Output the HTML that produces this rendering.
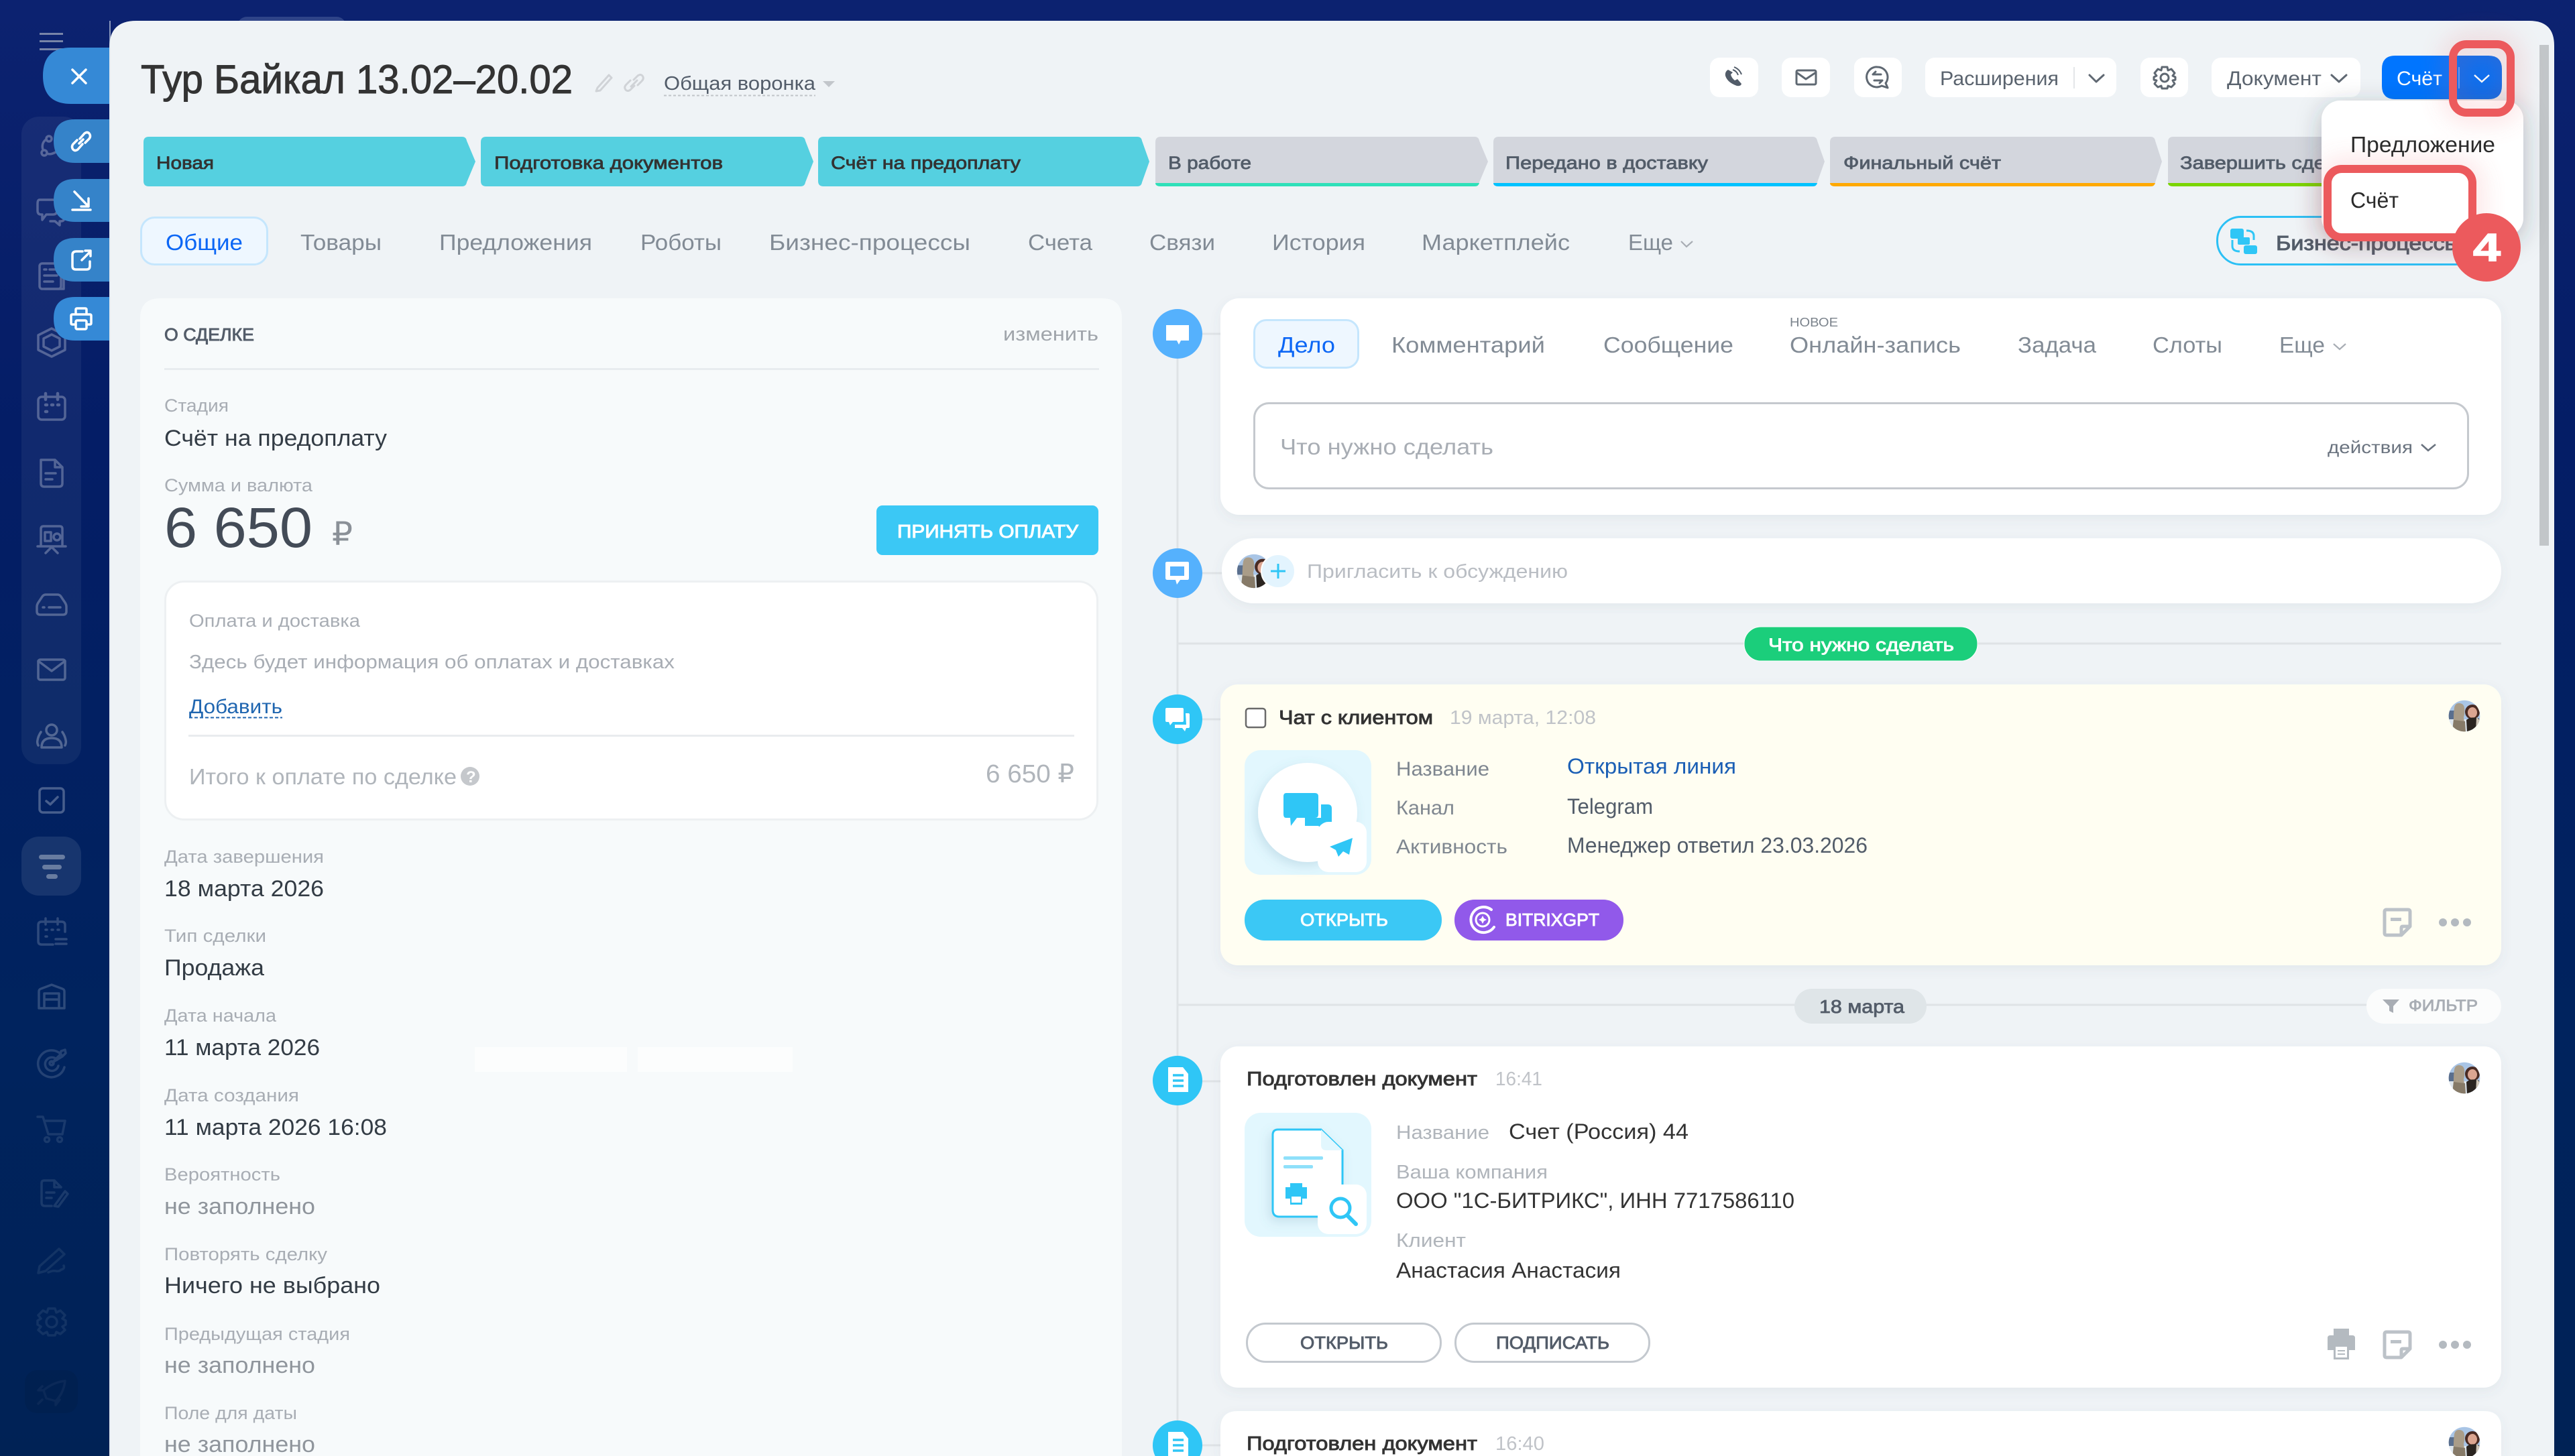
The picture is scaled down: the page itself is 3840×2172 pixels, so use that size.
<!DOCTYPE html>
<html lang="ru"><head><meta charset="utf-8"><title>Тур Байкал 13.02–20.02</title>
<style>
html,body{margin:0;padding:0;background:#04205f;width:3840px;height:2172px;overflow:hidden}
svg{display:block}
text{font-family:"Liberation Sans","DejaVu Sans",sans-serif;white-space:pre}
.st{font-size:27px;fill:#333;stroke:#333;stroke-width:.8}
.sg{font-size:27px;fill:#525c69;stroke:#525c69;stroke-width:.8}
.tb{font-size:33px;fill:#828b95}
.ta{font-size:33px;fill:#0b66f5}
.tp{font-size:30px;fill:#5a636e}
.la{font-size:27px;fill:#a8adb4}
.va{font-size:34px;fill:#333c45}
.em{font-size:34px;fill:#8f959c}
.lk{font-size:30px;fill:#7f8790}
.lb{font-size:29px;fill:#b0b5bb}
.vb{font-size:32px;fill:#333}
.hd{font-size:29px;fill:#333;stroke:#333;stroke-width:.9}
.tm{font-size:29px;fill:#c0c3c8}
.bw{font-size:26px;fill:#fff;stroke:#fff;stroke-width:.9}
.bd{font-size:26px;fill:#535c69;stroke:#535c69;stroke-width:.9}
.ic{fill:none;stroke:#fff;stroke-width:3.5;stroke-linecap:round;stroke-linejoin:round}
.ig{fill:none;stroke:#5f6872;stroke-width:3;stroke-linecap:round;stroke-linejoin:round}
.w{fill:none;stroke:#fff;stroke-width:3.5;stroke-linecap:round;stroke-linejoin:round}
</style></head>
<body>
<svg xmlns="http://www.w3.org/2000/svg" width="3840" height="2172" viewBox="0 0 3840 2172">
<defs>
<linearGradient id="bg" x1="0" y1="0" x2="0" y2="1"><stop offset="0" stop-color="#0c2270"/><stop offset=".3" stop-color="#041d66"/><stop offset=".7" stop-color="#00235e"/><stop offset="1" stop-color="#002255"/></linearGradient>
<filter id="card" x="-5%" y="-15%" width="110%" height="130%"><feDropShadow dx="0" dy="6" stdDeviation="8" flood-color="#5a6a78" flood-opacity=".08"/></filter>
<filter id="drop" x="-40%" y="-40%" width="180%" height="180%"><feDropShadow dx="0" dy="8" stdDeviation="18" flood-color="#2a3540" flood-opacity=".3"/></filter>
<filter id="glow" x="-60%" y="-60%" width="220%" height="220%"><feGaussianBlur stdDeviation="20"/></filter>
<filter id="soft" x="-30%" y="-30%" width="160%" height="160%"><feDropShadow dx="-4" dy="6" stdDeviation="8" flood-color="#5a8ca5" flood-opacity=".2"/></filter>
<clipPath id="avc"><circle r="23.300"/></clipPath>
<g id="av"><g clip-path="url(#avc)">
<rect x="-24" y="-24" width="48" height="48" fill="#a9c5e6"/>
<rect x="-24" y="-8" width="14" height="14" fill="#5a6f8e"/>
<rect x="-24" y="5" width="48" height="20" fill="#dfe7ee"/>
<path d="M-15-12Q-14-19-8-19Q-1-19 0-12Q1-4-1 2L2 24H-18L-16 4Q-16-6-15-12Z" fill="#a99c88"/>
<path d="M-16 6L-18 24H2L1 8Z" fill="#867a68"/>
<circle cx="12" cy="-6" r="11" fill="#4a2b23"/>
<ellipse cx="12" cy="-5" rx="7" ry="8" fill="#dba591"/>
<path d="M3 6Q10 0 22 4L25 24H4Z" fill="#2a2420"/>
<path d="M18 2L25 8V24H17Z" fill="#cfc6b8"/>
</g></g>
<g id="note"><path d="M-19-16Q-19-19-16-19H16Q19-19 19-16V6L6 19H-16Q-19 19-19 16Z" fill="none" stroke="#bcc2c8" stroke-width="5" stroke-linejoin="round"/><rect x="-10" y="-7" width="16" height="5" fill="#bcc2c8"/><path d="M6 19V8Q6 6 8 6H19" fill="none" stroke="#bcc2c8" stroke-width="5"/></g>
<g id="dots" fill="#b4bac0"><circle cx="-18" r="6"/><circle r="6"/><circle cx="18" r="6"/></g>
</defs>

<rect width="3840" height="2172" fill="url(#bg)"/>
<rect x="354" y="25" width="162" height="30" rx="14" fill="#2f4488"/>
<g fill="#7885a8"><rect x="59" y="49" width="35" height="3"/><rect x="59" y="60" width="35" height="3"/><rect x="59" y="72" width="35" height="3"/></g>
<rect x="32" y="174" width="89" height="966" rx="26" fill="#fff" opacity=".055"/>
<rect x="32" y="1248" width="89" height="88" rx="26" fill="#fff" opacity=".09"/>
<rect x="37" y="2044" width="79" height="64" rx="18" fill="#000" opacity=".06"/>

<!-- sidebar icons -->
<g class="ic" opacity=".28">
<g transform="translate(77,215)"><circle cx="-11" cy="13" r="4"/><circle cx="-4" cy="-8" r="4"/><path d="M-13 8C-15 2-13-4-8-7M-7 14C-2 16 2 14 6 12"/></g>
<g transform="translate(77,316)"><path d="M-18-18H2Q8-18 8-12V-2Q8 4 2 4H-8L-14 12V4H-16Q-21 4-21-2V-12Q-21-18-18-18Z"/><path d="M8-6H14Q19-6 19 0V8Q19 14 14 14H12V20L5 14H-2"/></g>
<g transform="translate(77,412)"><rect x="-18" y="-19" width="32" height="38" rx="4"/><path d="M-11-10H-8M-3-10H8M-11-1H8M-11 8H2M14-12H18V19H-10"/></g>
<g transform="translate(77,511)"><path d="M0-21L20-11V11L0 21L-20 11V-11Z"/><path d="M0-12L12-6V6L0 12L-12 6V-6Z"/></g>
<g transform="translate(77,607)"><rect x="-20" y="-15" width="40" height="34" rx="5"/><path d="M-9-20V-11M9-20V-11M-9-3H-7M0-3H2M9-3H11M-9 7H-7" stroke-width="4.500"/></g>
<g transform="translate(77,706)"><path d="M-16-20H5L16-9V15Q16 20 11 20H-11Q-16 20-16 15ZM5-20V-9H16M-9 0H6M-9 9H1"/></g>
<g transform="translate(77,805)"><path d="M-21 10H21M-16 10V-16Q-16-20-12-20H12Q16-20 16-16V10M-9 20L0 11L9 20"/><rect x="-10" y="-11" width="9" height="13"/><ellipse cx="8" cy="-4" rx="5" ry="5"/></g>
<g transform="translate(77,902)"><path d="M-22 10V3Q-22 0-20-3L-14-12Q-12-15-9-15H9Q12-15 14-12L20-3Q22 0 22 3V10Q22 15 17 15H-17Q-22 15-22 10Z"/><path d="M-13 4H-11M-4 4H13"/></g>
<g transform="translate(77,999)"><rect x="-20" y="-15" width="40" height="30" rx="3"/><path d="M-20-13L0 2L20-13"/></g>
<g transform="translate(77,1098)"><circle cy="-9" r="8"/><path d="M-15 17Q-15 3 0 3Q15 3 15 17ZM-16-6Q-20 0-21 6Q-22 10-20 14M16-6Q20 0 21 6Q22 10 20 14"/></g>
<g transform="translate(77,1194)"><rect x="-18" y="-18" width="36" height="36" rx="5"/><path d="M-8 1L-2 6L9-5"/></g>
</g>
<g fill="#fff" opacity=".35"><rect x="58" y="1275" width="39" height="7" rx="3.500"/><rect x="63" y="1290" width="29" height="7" rx="3.500"/><rect x="69" y="1304" width="17" height="7" rx="3.500"/></g>
<g class="ic" opacity=".18">
<g transform="translate(77,1390)"><path d="M20 0V-10Q20-15 15-15H-15Q-20-15-20-10V14Q-20 19-15 19H2"/><path d="M-9-20V-11M9-20V-11M-9-3H-7M0-3H2M9-3H11M-9 7H-7M6 11H22M6 18H22"/></g>
<g transform="translate(77,1487)"><path d="M-19 17V-8Q-19-11-16-12L0-18L16-12Q19-11 19-8V17ZM-11 17V-5H11V17M-11 4H11"/></g>
</g>
<g class="ic" opacity=".14">
<g transform="translate(77,1586)"><path d="M15-12A20 20 0 1 0 19 6"/><path d="M8-5A10 10 0 1 0 10 4"/><circle r="3"/><path d="M1-1L13-13L14-18L20-20L21-15L16-10Z"/></g>
</g>
<g class="ic" opacity=".1">
<g transform="translate(77,1684)"><path d="M-21-18H-13L-5 8H16L20-12H-11"/><circle cx="-7" cy="16" r="3.500"/><circle cx="12" cy="16" r="3.500"/></g>
<g transform="translate(77,1781)"><path d="M-15 13V-16Q-15-20-11-20H4L14-10M4-20V-10H14M-15 13Q-15 18-10 18H0M-8-2H4M-8 6H0M4 18L20-4L24 0L10 19Z"/></g>
</g>
<g class="ic" opacity=".075">
<g transform="translate(77,1879)"><path d="M-18 10L11-16L19-8L-9 17L-20 20ZM-5 19Q2 16 6 17Q12 18 14 15Q20 14 18 9"/></g>
<g transform="translate(77,1972)"><circle r="8"/><path d="M-5-20H5L7-14L13-17L20-10L16-5L21-2V4L16 7L20 12L13 18L7 15L5 20H-5L-7 15L-13 18L-20 12L-16 7L-21 4V-2L-16-5L-20-10L-13-17L-7-14Z"/></g>
</g>
<g class="ic" opacity=".045" transform="translate(77,2076)"><path d="M-8 10L-12-2Q2-14 20-16Q18 2 6 14ZM-12-2H-20L-14-8M6 14V20L12 12M-14 12L-20 18"/></g>

<!-- main panel -->
<path d="M163 71Q163 31 203 31H3772Q3809 31 3809 68V2172H163Z" fill="#eff3f6"/>
<rect x="163" y="31" width="2" height="2141" fill="#dfe8f0" opacity=".6"/>
<rect x="3787" y="67" width="14" height="747" fill="#c2c6c9"/>

<!-- side tabs -->
<path d="M163 71H106Q64 71 64 113Q64 155 106 155H163Z" fill="#3589d6"/>
<path d="M163 178H112Q80 178 80 210Q80 243 112 243H163Z" fill="#3583c9"/>
<path d="M163 267H112Q80 267 80 299Q80 331 112 331H163Z" fill="#3583c9"/>
<path d="M163 355H112Q80 355 80 387Q80 420 112 420H163Z" fill="#3583c9"/>
<path d="M163 443H112Q80 443 80 475Q80 508 112 508H163Z" fill="#3589d6"/>
<path d="M108 104L128 124M128 104L108 124" class="w"/>
<g class="w" transform="translate(121,211)"><path d="M-2-4L5-12Q9-15 12-12Q15-8 12-4L6 2M2 4L-5 12Q-9 15-12 12Q-15 8-12 4L-6-2M-3 3L3-3"/></g>
<g class="w" transform="translate(121,299)"><path d="M-10-13L11 9M11-3V9H0M-13 14H14"/></g>
<g class="w" transform="translate(121,388)"><path d="M2-13H-7Q-13-13-13-8V9Q-13 14-8 14H8Q13 14 13 9V2M1 0L14-13M6-14H14V-6"/></g>
<g class="w" transform="translate(121,476)"><path d="M-8-7V-14Q-8-16-6-16H6Q8-16 8-14V-7M-8 8H-13Q-15 8-15 6V-5Q-15-7-13-7H13Q15-7 15-5V6Q15 8 13 8H8"/><rect x="-8" y="2" width="16" height="13" rx="2"/></g>

<!-- header -->
<text x="210" y="139" font-size="60" fill="#333" stroke="#333" stroke-width="1" textLength="644" lengthAdjust="spacingAndGlyphs">Тур Байкал 13.02–20.02</text>
<g fill="none" stroke="#d0d3d7" stroke-width="3" stroke-linejoin="round" stroke-linecap="round"><path d="M891 131L908 112L912 116L895 135L889 136Z"/><path d="M945 119L951 113Q955 110 958 113Q961 117 957 121L951 127M946 128L940 134Q936 137 933 134Q930 130 934 126L940 120M941 129L950 120"/></g>
<text x="990" y="134" font-size="29" fill="#525c69" textLength="226" lengthAdjust="spacingAndGlyphs">Общая воронка</text>
<path d="M990 142.500H1216" stroke="#c0c4c8" stroke-width="2" stroke-dasharray="4 3"/>
<path d="M1227 121H1245L1236 130Z" fill="#c2c6cb"/>

<!-- tool buttons -->
<g fill="#fff"><rect x="2550" y="86" width="72" height="59" rx="14"/><rect x="2657" y="86" width="72" height="59" rx="14"/><rect x="2765" y="86" width="71" height="59" rx="14"/><rect x="2871" y="86" width="285" height="59" rx="14"/><rect x="3192" y="86" width="71" height="59" rx="14"/><rect x="3298" y="86" width="222" height="59" rx="14"/></g>
<path d="M2577 104Q2572 107 2573 113Q2576 123 2590 128Q2596 129 2597 125L2591 118L2587 120Q2582 116 2581 111L2584 108Z" fill="#525c69"/>
<path d="M2584 104Q2590 106 2592 112M2586 100Q2594 103 2597 111" fill="none" stroke="#525c69" stroke-width="2"/>
<g class="ig"><rect x="2679" y="105" width="29" height="21" rx="2"/><path d="M2679 108L2693 118L2708 108"/></g>
<g class="ig"><path d="M2800 100A15 15 0 0 1 2812 124L2815 131L2806 128A15 15 0 1 1 2800 100Z"/><path d="M2793 111H2805M2793 111L2797 107M2807 120H2795M2807 120L2803 124"/></g>
<text x="2893" y="127" class="tp" textLength="177" lengthAdjust="spacingAndGlyphs">Расширения</text>
<path d="M3093 100V132" stroke="#e3e6e9" stroke-width="2"/>
<path d="M3116 112L3126 122L3137 112" class="ig" stroke-width="2.400"/>
<g class="ig" transform="translate(3228,116)"><circle r="6"/><path d="M-4-16H4L5-11L10-13L15-7L12-3L16-1V3L12 4L15 9L10 14L5 12L4 16H-4L-5 12L-10 14L-15 9L-12 4L-16 3V-1L-12-3L-15-7L-10-13L-5-11Z"/></g>
<text x="3321" y="127" class="tp" textLength="141" lengthAdjust="spacingAndGlyphs">Документ</text>
<path d="M3477 112L3488 122L3499 112" class="ig" stroke-width="2.400"/>

<!-- stages -->
<g fill="#55d0e0">
<path d="M222 204H689Q695 204 696 210L709 241L696 272Q695 278 689 278H222Q214 278 214 270V212Q214 204 222 204Z"/>
<path d="M725 204H1194Q1200 204 1201 210L1213 241L1201 272Q1200 278 1194 278H725Q717 278 717 270V212Q717 204 725 204Z"/>
<path d="M1228 204H1696Q1702 204 1703 210L1714 241L1703 272Q1702 278 1696 278H1228Q1220 278 1220 270V212Q1220 204 1228 204Z"/>
</g>
<g fill="#d3d6dd">
<path d="M1731 204H2199Q2205 204 2206 210L2219 241L2206 272Q2205 278 2199 278H1731Q1723 278 1723 270V212Q1723 204 1731 204Z"/>
<path d="M2235 204H2703Q2709 204 2710 210L2721 241L2710 272Q2709 278 2703 278H2235Q2227 278 2227 270V212Q2227 204 2235 204Z"/>
<path d="M2737 204H3207Q3213 204 3214 210L3224 241L3214 272Q3213 278 3207 278H2737Q2729 278 2729 270V212Q2729 204 2737 204Z"/>
<path d="M3241 204H3710Q3716 204 3717 210L3727 241L3717 272Q3716 278 3710 278H3241Q3233 278 3233 270V212Q3233 204 3241 204Z"/>
</g>
<path d="M1723 273H2206Q2205 278 2199 278H1731Q1723 278 1723 273Z" fill="#2fe0b9"/>
<path d="M2227 273H2710Q2709 278 2703 278H2235Q2227 278 2227 273Z" fill="#00c2ff"/>
<path d="M2729 273H3214Q3213 278 3207 278H2737Q2729 278 2729 273Z" fill="#ffa900"/>
<path d="M3233 273H3717Q3716 278 3710 278H3241Q3233 278 3233 273Z" fill="#7bd500"/>
<text x="233" y="252" class="st" textLength="86" lengthAdjust="spacingAndGlyphs">Новая</text>
<text x="737" y="252" class="st" textLength="341" lengthAdjust="spacingAndGlyphs">Подготовка документов</text>
<text x="1239" y="252" class="st" textLength="283" lengthAdjust="spacingAndGlyphs">Счёт на предоплату</text>
<text x="1742" y="252" class="sg" textLength="124" lengthAdjust="spacingAndGlyphs">В работе</text>
<text x="2245" y="252" class="sg" textLength="302" lengthAdjust="spacingAndGlyphs">Передано в доставку</text>
<text x="2749" y="252" class="sg" textLength="235" lengthAdjust="spacingAndGlyphs">Финальный счёт</text>
<text x="3251" y="252" class="sg" textLength="263" lengthAdjust="spacingAndGlyphs">Завершить сделку</text>

<!-- tabs -->
<rect x="210.500" y="324.500" width="188" height="70" rx="20" fill="#eef7ff" stroke="#c5e6fd" stroke-width="3"/>
<text x="247" y="373" class="ta" textLength="115" lengthAdjust="spacingAndGlyphs">Общие</text>
<text x="448" y="373" class="tb" textLength="121" lengthAdjust="spacingAndGlyphs">Товары</text>
<text x="655" y="373" class="tb" textLength="228" lengthAdjust="spacingAndGlyphs">Предложения</text>
<text x="955" y="373" class="tb" textLength="121" lengthAdjust="spacingAndGlyphs">Роботы</text>
<text x="1147" y="373" class="tb" textLength="300" lengthAdjust="spacingAndGlyphs">Бизнес-процессы</text>
<text x="1533" y="373" class="tb" textLength="96" lengthAdjust="spacingAndGlyphs">Счета</text>
<text x="1714" y="373" class="tb" textLength="98" lengthAdjust="spacingAndGlyphs">Связи</text>
<text x="1897" y="373" class="tb" textLength="139" lengthAdjust="spacingAndGlyphs">История</text>
<text x="2120" y="373" class="tb" textLength="221" lengthAdjust="spacingAndGlyphs">Маркетплейс</text>
<text x="2428" y="373" class="tb" textLength="67" lengthAdjust="spacingAndGlyphs">Еще</text>
<path d="M2507 360L2515 368L2524 360" fill="none" stroke="#a8adb4" stroke-width="2.200"/>

<!-- business process button -->
<rect x="3306.500" y="323.500" width="440" height="71" rx="35" fill="none" stroke="#2bc0f5" stroke-width="3"/>
<g fill="#2fc6f6"><rect x="3326" y="341" width="20" height="15" rx="3"/><rect x="3337" y="354" width="18" height="11" rx="2"/><rect x="3346" y="366" width="20" height="13" rx="3"/></g>
<path d="M3350 344Q3361 344 3361 352V358M3340 375Q3329 375 3329 367V358" fill="none" stroke="#2fc6f6" stroke-width="3"/>
<text x="3394" y="373" font-size="31" fill="#525c69" stroke="#525c69" stroke-width="1" textLength="276" lengthAdjust="spacingAndGlyphs">Бизнес-процессы</text>

<!-- left card -->
<path d="M239 445H1643Q1673 445 1673 475V2172H209V475Q209 445 239 445Z" fill="#f7fafb"/>
<text x="245" y="508" font-size="26" fill="#535c69" stroke="#535c69" stroke-width=".9" textLength="134" lengthAdjust="spacingAndGlyphs">О СДЕЛКЕ</text>
<text x="1496" y="508" font-size="29" fill="#a0a5ab" textLength="142" lengthAdjust="spacingAndGlyphs">изменить</text>
<rect x="245" y="549" width="1394" height="3" fill="#e8ecef"/>
<text x="245" y="614" class="la" textLength="96" lengthAdjust="spacingAndGlyphs">Стадия</text>
<text x="245" y="665" class="va" textLength="332" lengthAdjust="spacingAndGlyphs">Счёт на предоплату</text>
<text x="245" y="733" class="la" textLength="221" lengthAdjust="spacingAndGlyphs">Сумма и валюта</text>
<text x="245" y="816" font-size="84" fill="#434b57" textLength="221" lengthAdjust="spacingAndGlyphs">6 650</text>
<text x="495" y="813" font-size="48" fill="#8a9097" textLength="31" lengthAdjust="spacingAndGlyphs">₽</text>
<rect x="1307" y="754" width="331" height="74" rx="9" fill="#3bc8f5"/>
<text x="1338" y="802" font-size="28" fill="#fff" stroke="#fff" stroke-width="1" textLength="270" lengthAdjust="spacingAndGlyphs">ПРИНЯТЬ ОПЛАТУ</text>
<rect x="246.500" y="867.500" width="1390" height="355" rx="28" fill="#fff" stroke="#edf0f2" stroke-width="3"/>
<text x="282" y="935" class="la" textLength="255" lengthAdjust="spacingAndGlyphs">Оплата и доставка</text>
<text x="282" y="997" font-size="29" fill="#a8adb4" textLength="724" lengthAdjust="spacingAndGlyphs">Здесь будет информация об оплатах и доставках</text>
<text x="282" y="1064" font-size="30" fill="#2066b0" textLength="139" lengthAdjust="spacingAndGlyphs">Добавить</text>
<path d="M282 1070.500H421" stroke="#2066b0" stroke-width="2" stroke-dasharray="5 3"/>
<rect x="281" y="1096" width="1321" height="3" fill="#e9ecee"/>
<text x="282" y="1170" font-size="33" fill="#b0b5bb" textLength="399" lengthAdjust="spacingAndGlyphs">Итого к оплате по сделке</text>
<circle cx="701" cy="1158" r="14" fill="#c5c8cc"/><text x="695" y="1167" font-size="24" font-weight="700" fill="#fff">?</text>
<text x="1470" y="1167" font-size="38" fill="#b0b5bb" textLength="132" lengthAdjust="spacingAndGlyphs">6 650 ₽</text>

<text x="245" y="1287" class="la" textLength="238" lengthAdjust="spacingAndGlyphs">Дата завершения</text>
<text x="245" y="1337" class="va" textLength="238" lengthAdjust="spacingAndGlyphs">18 марта 2026</text>
<text x="245" y="1405" class="la" textLength="152" lengthAdjust="spacingAndGlyphs">Тип сделки</text>
<text x="245" y="1455" class="va" textLength="149" lengthAdjust="spacingAndGlyphs">Продажа</text>
<text x="245" y="1524" class="la" textLength="167" lengthAdjust="spacingAndGlyphs">Дата начала</text>
<text x="245" y="1574" class="va" textLength="232" lengthAdjust="spacingAndGlyphs">11 марта 2026</text>
<text x="245" y="1643" class="la" textLength="201" lengthAdjust="spacingAndGlyphs">Дата создания</text>
<text x="245" y="1693" class="va" textLength="332" lengthAdjust="spacingAndGlyphs">11 марта 2026 16:08</text>
<text x="245" y="1761" class="la" textLength="173" lengthAdjust="spacingAndGlyphs">Вероятность</text>
<text x="245" y="1811" class="em" textLength="225" lengthAdjust="spacingAndGlyphs">не заполнено</text>
<text x="245" y="1880" class="la" textLength="243" lengthAdjust="spacingAndGlyphs">Повторять сделку</text>
<text x="245" y="1929" class="va" textLength="322" lengthAdjust="spacingAndGlyphs">Ничего не выбрано</text>
<text x="245" y="1999" class="la" textLength="277" lengthAdjust="spacingAndGlyphs">Предыдущая стадия</text>
<text x="245" y="2048" class="em" textLength="225" lengthAdjust="spacingAndGlyphs">не заполнено</text>
<text x="245" y="2117" class="la" textLength="198" lengthAdjust="spacingAndGlyphs">Поле для даты</text>
<text x="245" y="2166" class="em" textLength="225" lengthAdjust="spacingAndGlyphs">не заполнено</text>
<rect x="708" y="1562" width="227" height="37" fill="#fcfdfd"/><rect x="951" y="1562" width="231" height="37" fill="#fcfdfd"/>

<!-- timeline -->
<g stroke="#dfe3e6" stroke-width="3" fill="none"><path d="M1756 498V2172"/><path d="M1756 498H1820M1756 855H1826M1756 1073H1820M1756 1613H1820M1756 2156H1820"/><path d="M1756 960H3730M1756 1499H3730"/></g>

<!-- editor card -->
<rect x="1820" y="445" width="1910" height="323" rx="28" fill="#fff" filter="url(#card)"/>
<rect x="1870.500" y="477.500" width="155" height="71" rx="18" fill="#eef7ff" stroke="#c5e6fd" stroke-width="3"/>
<text x="1906" y="526" class="ta" textLength="85" lengthAdjust="spacingAndGlyphs">Дело</text>
<text x="2075" y="526" class="tb" textLength="229" lengthAdjust="spacingAndGlyphs">Комментарий</text>
<text x="2391" y="526" class="tb" textLength="194" lengthAdjust="spacingAndGlyphs">Сообщение</text>
<text x="2669" y="487" font-size="18" fill="#7b838c" textLength="72" lengthAdjust="spacingAndGlyphs">НОВОЕ</text>
<text x="2669" y="526" class="tb" textLength="255" lengthAdjust="spacingAndGlyphs">Онлайн-запись</text>
<text x="3009" y="526" class="tb" textLength="117" lengthAdjust="spacingAndGlyphs">Задача</text>
<text x="3210" y="526" class="tb" textLength="104" lengthAdjust="spacingAndGlyphs">Слоты</text>
<text x="3399" y="526" class="tb" textLength="68" lengthAdjust="spacingAndGlyphs">Еще</text>
<path d="M3480 513L3489 521L3498 513" fill="none" stroke="#a8adb4" stroke-width="2.200"/>
<rect x="1870.500" y="601.500" width="1810" height="127" rx="22" fill="#fff" stroke="#c5c9ce" stroke-width="3"/>
<text x="1909" y="678" font-size="33" fill="#a8adb4" textLength="318" lengthAdjust="spacingAndGlyphs">Что нужно сделать</text>
<text x="3471" y="676" font-size="26" fill="#6a737f" textLength="127" lengthAdjust="spacingAndGlyphs">действия</text>
<path d="M3611 663L3621 672L3632 663" fill="none" stroke="#6a737f" stroke-width="2.600"/>

<!-- invite card -->
<rect x="1822" y="803" width="1908" height="97" rx="48" fill="#fff" filter="url(#card)"/>
<use href="#av" transform="translate(1870,852) scale(1.080)"/>
<circle cx="1906" cy="852" r="25" fill="#e3f4fe" stroke="#fff" stroke-width="2"/>
<path d="M1906 841V863M1895 852H1917" stroke="#2fc6f6" stroke-width="3"/>
<text x="1949" y="862" font-size="29" fill="#b9bdc3" textLength="389" lengthAdjust="spacingAndGlyphs">Пригласить к обсуждению</text>

<!-- circles -->
<circle cx="1756" cy="498" r="37" fill="#55b1fd"/>
<path d="M1739 485H1773V508H1761L1758 514L1755 508H1739Z" fill="#fff"/>
<circle cx="1756" cy="855" r="37" fill="#55b1fd"/>
<path d="M1741 838H1771Q1773 838 1773 840V862Q1773 865 1771 865H1760L1755 872L1753 865H1741Q1738 865 1738 862V840Q1738 838 1741 838ZM1745 845V859H1766V845Z" fill="#fff" fill-rule="evenodd"/>
<circle cx="1756" cy="1073" r="37" fill="#2fc6f6"/>
<path d="M1740 1056H1763Q1765 1056 1765 1058V1075Q1765 1077 1763 1077H1749L1745 1082L1743 1077H1740Q1738 1077 1738 1075V1058Q1738 1056 1740 1056Z" fill="#fff"/>
<path d="M1768 1064H1772Q1774 1064 1774 1066V1084Q1774 1086 1772 1086H1769L1767 1091L1763 1086H1752V1081H1769Z" fill="#fff"/>
<circle cx="1756" cy="1612" r="37" fill="#2fc6f6"/>
<path d="M1742 1592H1764L1772 1602V1629H1742Z" fill="#fff"/><path d="M1749 1604H1765M1749 1612H1765M1749 1620H1765" stroke="#2fc6f6" stroke-width="3.500"/>

<!-- open-line card -->
<rect x="1820" y="1021" width="1910" height="419" rx="26" fill="#fffef2" filter="url(#card)"/>
<rect x="1858" y="1057" width="29" height="28" rx="4" fill="#fff" stroke="#6a6a6a" stroke-width="2.500"/>
<text x="1907" y="1080" class="hd" textLength="230" lengthAdjust="spacingAndGlyphs">Чат с клиентом</text>
<text x="2162" y="1080" class="tm" textLength="218" lengthAdjust="spacingAndGlyphs">19 марта, 12:08</text>
<use href="#av" transform="translate(3675,1068)"/>
<rect x="1856" y="1119" width="189" height="186" rx="24" fill="#e2f7fe"/>
<circle cx="1950" cy="1212" r="74" fill="#fff" filter="url(#soft)"/>
<path d="M1970 1200H1980Q1986 1200 1986 1206V1226Q1986 1232 1980 1232H1978L1976 1240L1966 1232H1946V1220H1970Z" fill="#2fc6f6"/>
<path d="M1918 1183H1961Q1966 1183 1966 1188V1215Q1966 1220 1961 1220H1934L1925 1232L1924 1220H1918Q1914 1220 1914 1215V1188Q1914 1183 1918 1183Z" fill="#2fc6f6"/>
<rect x="1965" y="1226" width="73" height="75" rx="16" fill="#fff"/>
<path d="M2017 1250L1983 1263L1992 1268L1996 1278L2003 1270L2012 1275Z" fill="#2fc6f6"/>
<text x="2082" y="1157" class="lk" textLength="139" lengthAdjust="spacingAndGlyphs">Название</text>
<text x="2337" y="1154" font-size="32" fill="#1b5fb5" textLength="252" lengthAdjust="spacingAndGlyphs">Открытая линия</text>
<text x="2082" y="1215" class="lk" textLength="87" lengthAdjust="spacingAndGlyphs">Канал</text>
<text x="2337" y="1214" font-size="32" fill="#525c69" textLength="128" lengthAdjust="spacingAndGlyphs">Telegram</text>
<text x="2082" y="1273" class="lk" textLength="166" lengthAdjust="spacingAndGlyphs">Активность</text>
<text x="2337" y="1272" font-size="32" fill="#525c69" textLength="448" lengthAdjust="spacingAndGlyphs">Менеджер ответил 23.03.2026</text>
<rect x="1856" y="1342" width="294" height="61" rx="30" fill="#3bc8f5"/>
<text x="1939" y="1381" class="bw" textLength="131" lengthAdjust="spacingAndGlyphs">ОТКРЫТЬ</text>
<rect x="2169" y="1342" width="252" height="61" rx="30" fill="#9159ea"/>
<path d="M2224 1357A19 19 0 1 0 2228 1383" fill="none" stroke="#fff" stroke-width="4" stroke-linecap="round"/>
<circle cx="2211" cy="1372" r="10" fill="none" stroke="#fff" stroke-width="3"/><path d="M2211 1366L2213 1370L2217 1372L2213 1374L2211 1378L2209 1374L2205 1372L2209 1370Z" fill="#fff"/>
<text x="2245" y="1381" class="bw" textLength="140" lengthAdjust="spacingAndGlyphs">BITRIXGPT</text>
<use href="#note" transform="translate(3575,1376)"/>
<use href="#dots" transform="translate(3661,1376)"/>

<!-- date pills -->
<rect x="2601" y="935" width="348" height="51" rx="25" fill="#1bce7b" stroke="#fff" stroke-width="1"/>
<text x="2637" y="971" font-size="27" fill="#fff" stroke="#fff" stroke-width=".9" textLength="277" lengthAdjust="spacingAndGlyphs">Что нужно сделать</text>
<rect x="2676" y="1475" width="197" height="52" rx="26" fill="#dfe5e8"/>
<text x="2713" y="1511" font-size="28" fill="#535c69" stroke="#535c69" stroke-width=".8" textLength="127" lengthAdjust="spacingAndGlyphs">18 марта</text>
<rect x="3529" y="1475" width="201" height="52" rx="26" fill="#fbfcfc"/>
<path d="M3553 1491H3578L3569 1501V1511L3563 1508V1501Z" fill="#a8adb4"/>
<text x="3592" y="1508" font-size="24" fill="#a8adb4" stroke="#a8adb4" stroke-width=".8" textLength="103" lengthAdjust="spacingAndGlyphs">ФИЛЬТР</text>

<!-- document card -->
<rect x="1820" y="1561" width="1910" height="509" rx="26" fill="#fff" filter="url(#card)"/>
<text x="1859" y="1619" class="hd" textLength="344" lengthAdjust="spacingAndGlyphs">Подготовлен документ</text>
<text x="2230" y="1619" class="tm" textLength="70" lengthAdjust="spacingAndGlyphs">16:41</text>
<use href="#av" transform="translate(3675,1608)"/>
<rect x="1856" y="1660" width="189" height="185" rx="24" fill="#e2f7fe"/>
<path d="M1906 1685H1970L2002 1716V1805Q2002 1815 1992 1815H1908Q1898 1815 1898 1805V1693Q1898 1685 1906 1685Z" fill="#fff" stroke="#2fc6f6" stroke-width="3" filter="url(#soft)"/>
<path d="M1970 1685V1708Q1970 1716 1978 1716H2002Z" fill="#e2f7fe"/>
<rect x="1914" y="1725" width="59" height="5" rx="2" fill="#8fe0fa"/><rect x="1914" y="1738" width="44" height="5" rx="2" fill="#8fe0fa"/>
<path d="M1924 1765H1942V1771H1949V1788H1942V1797H1924V1788H1917V1771H1924Z" fill="#2fc6f6"/><rect x="1926" y="1785" width="14" height="9" fill="#fff"/>
<rect x="1965" y="1767" width="73" height="74" rx="16" fill="#fff"/>
<circle cx="1999" cy="1802" r="14" fill="none" stroke="#2fc6f6" stroke-width="5"/><path d="M2009 1813L2022 1826" stroke="#2fc6f6" stroke-width="6" stroke-linecap="round"/>
<text x="2082" y="1699" class="lb" textLength="139" lengthAdjust="spacingAndGlyphs">Название</text>
<text x="2250" y="1699" class="vb" textLength="268" lengthAdjust="spacingAndGlyphs">Счет (Россия) 44</text>
<text x="2082" y="1758" class="lb" textLength="226" lengthAdjust="spacingAndGlyphs">Ваша компания</text>
<text x="2082" y="1802" class="vb" textLength="594" lengthAdjust="spacingAndGlyphs">ООО "1С-БИТРИКС", ИНН 7717586110</text>
<text x="2082" y="1860" class="lb" textLength="104" lengthAdjust="spacingAndGlyphs">Клиент</text>
<text x="2082" y="1906" class="vb" textLength="335" lengthAdjust="spacingAndGlyphs">Анастасия Анастасия</text>
<rect x="1859.500" y="1974.500" width="289" height="57" rx="28" fill="#fff" stroke="#c4c9cf" stroke-width="3"/>
<text x="1939" y="2012" class="bd" textLength="131" lengthAdjust="spacingAndGlyphs">ОТКРЫТЬ</text>
<rect x="2170.500" y="1974.500" width="289" height="57" rx="28" fill="#fff" stroke="#c4c9cf" stroke-width="3"/>
<text x="2231" y="2012" class="bd" textLength="169" lengthAdjust="spacingAndGlyphs">ПОДПИСАТЬ</text>
<path d="M3480 1982H3503V1992H3508Q3512 1992 3512 1996V2014H3503V2028H3480V2014H3471V1996Q3471 1992 3475 1992H3480Z" fill="#b4bac0"/><rect x="3483" y="2009" width="17" height="16" fill="#fff"/><rect x="3486" y="2014" width="11" height="2" fill="#b4bac0"/><rect x="3486" y="2019" width="11" height="2" fill="#b4bac0"/>
<use href="#note" transform="translate(3575,2006)"/>
<use href="#dots" transform="translate(3661,2006)"/>

<!-- next card -->
<path d="M1846 2105H3704Q3730 2105 3730 2131V2172H1820V2131Q1820 2105 1846 2105Z" fill="#fff" filter="url(#card)"/>
<circle cx="1756" cy="2156" r="37" fill="#2fc6f6"/>
<path d="M1742 2136H1764L1772 2146V2172H1742Z" fill="#fff"/><path d="M1749 2148H1765M1749 2156H1765M1749 2164H1765" stroke="#2fc6f6" stroke-width="3.500"/>
<text x="1859" y="2163" class="hd" textLength="344" lengthAdjust="spacingAndGlyphs">Подготовлен документ</text>
<text x="2230" y="2163" class="tm" textLength="73" lengthAdjust="spacingAndGlyphs">16:40</text>
<use href="#av" transform="translate(3675,2152)"/>

<!-- Счёт button -->
<path d="M3572 83H3667V148H3572Q3552 148 3552 128V103Q3552 83 3572 83Z" fill="#0075ff"/>
<path d="M3667 83H3711Q3731 83 3731 103V128Q3731 148 3711 148H3667Z" fill="#0a6ff0"/>
<text x="3574" y="127" font-size="30" fill="#fff" textLength="68" lengthAdjust="spacingAndGlyphs">Счёт</text>
<path d="M3667 100V132" stroke="#5aa2ff" stroke-width="2"/>
<path d="M3690 112L3701 122L3712 112" fill="none" stroke="#fff" stroke-width="2.400"/>

<!-- dropdown -->
<rect x="3462" y="150" width="301" height="203" rx="28" fill="#fff" filter="url(#drop)"/>

<!-- red glow -->
<g fill="none" stroke="#ec5a5d" stroke-width="18" filter="url(#glow)" opacity=".3">
<rect x="3658" y="66" width="86" height="102" rx="20"/>
<rect x="3471" y="252" width="216" height="102" rx="21"/>
</g>
<rect x="3477" y="258" width="204" height="90" rx="15" fill="#fff"/>

<text x="3505" y="227" font-size="33" fill="#2b2b2b" textLength="216" lengthAdjust="spacingAndGlyphs">Предложение</text>
<text x="3505" y="310" font-size="33" fill="#2b2b2b" textLength="72" lengthAdjust="spacingAndGlyphs">Счёт</text>

<!-- red highlights -->
<rect x="3658" y="66" width="86" height="102" rx="20" fill="none" stroke="#ec5a5d" stroke-width="12"/>
<rect x="3471" y="252" width="216" height="102" rx="21" fill="none" stroke="#ec5a5d" stroke-width="12"/>
<circle cx="3708" cy="369" r="51" fill="#ec5a5d"/>
<text x="3688" y="389" font-size="58" font-weight="700" fill="#fff" stroke="#fff" stroke-width="1.500" textLength="41" lengthAdjust="spacingAndGlyphs">4</text>
</svg>
</body></html>
